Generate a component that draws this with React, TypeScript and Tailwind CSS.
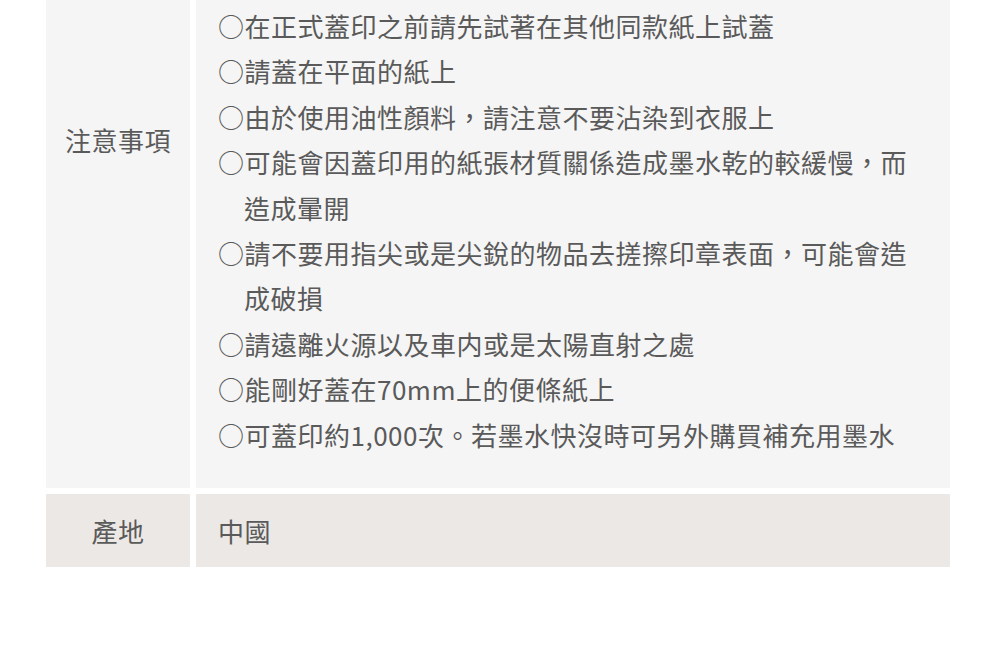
const notes = [
  "○在正式蓋印之前請先試著在其他同款紙上試蓋",
  "○請蓋在平面的紙上",
  "○由於使用油性顏料，請注意不要沾染到衣服上",
  "○可能會因蓋印用的紙張材質關係造成墨水乾的較緩慢，而造成暈開",
  "○請不要用指尖或是尖銳的物品去搓擦印章表面，可能會造成破損",
  "○請遠離火源以及車内或是太陽直射之處",
  "○能剛好蓋在70mm上的便條紙上",
  "○可蓋印約1,000次。若墨水快沒時可另外購買補充用墨水",
];

export default function App() {
  return (
    <div
      className="w-[1000px] h-[658px] overflow-hidden bg-white text-[#5a5a5a]"
      style={{ fontFamily: '"Noto Sans CJK TC", "Noto Sans", sans-serif' }}
    >
      <div className="ml-[46px] w-[904px] flex flex-col gap-[6px]">
        <div className="flex gap-[6px]">
          <div className="w-[144px] shrink-0 bg-[#f5f5f5] pt-[117px] text-center text-[26px] leading-[45.5px] tracking-[0.5px]">
            注意事項
          </div>
          <div className="flex-1 bg-[#f5f5f5] pl-[22px] pr-6 pt-[3px] pb-[31px]">
            <ul className="text-[26px] leading-[45.4px] tracking-[0.5px]">
              {notes.map((n, i) => (
                <li key={i} className="pl-[26px] indent-[-26px]">
                  {n}
                </li>
              ))}
            </ul>
          </div>
        </div>
        <div className="flex gap-[6px] h-[73px]">
          <div className="w-[144px] shrink-0 bg-[#ebe8e5] flex items-center justify-center text-[26px] tracking-[0.5px]">
            產地
          </div>
          <div className="flex-1 bg-[#ebe8e5] flex items-center pl-[22px] text-[26px] tracking-[0.5px]">
            中國
          </div>
        </div>
      </div>
    </div>
  );
}
